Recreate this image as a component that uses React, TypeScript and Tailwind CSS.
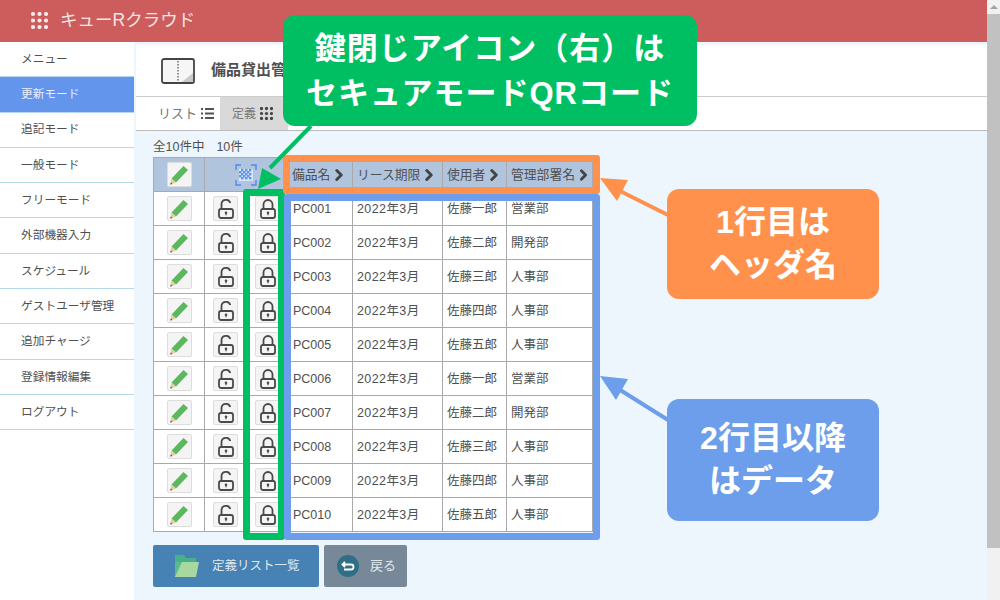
import { ChevronRight } from "lucide-react";

const menu = ["メニュー", "更新モード", "追記モード", "一般モード", "フリーモード", "外部機器入力", "スケジュール", "ゲストユーザ管理", "追加チャージ", "登録情報編集", "ログアウト"];
const heads = ["備品名", "リース期限", "使用者", "管理部署名"];
const rows = [
  ["PC001", "佐藤一郎", "営業部"],
  ["PC002", "佐藤二郎", "開発部"],
  ["PC003", "佐藤三郎", "人事部"],
  ["PC004", "佐藤四郎", "人事部"],
  ["PC005", "佐藤五郎", "人事部"],
  ["PC006", "佐藤一郎", "営業部"],
  ["PC007", "佐藤二郎", "開発部"],
  ["PC008", "佐藤三郎", "人事部"],
  ["PC009", "佐藤四郎", "人事部"],
  ["PC010", "佐藤五郎", "人事部"],
];

function Dots({ className }: { className: string }) {
  return (
    <svg viewBox="0 0 17 17" className={className} fill="currentColor">
      {[2, 8.5, 15].map((y) => [2, 8.5, 15].map((x) => <circle key={`${x}-${y}`} cx={x} cy={y} r="2.1" />))}
    </svg>
  );
}

function Pencil() {
  return (
    <svg viewBox="0 0 22 22" className="h-[22px] w-[22px]">
      <path d="M15.5 2 20 6 8 18.5 3.5 14.5z" fill="#5cb85c" />
      <path d="M3.5 14.5 8 18.5 2.2 20.5z" fill="#e8c9a0" />
      <path d="M2.9 18.6 4.4 20 2.2 20.5z" fill="#444" />
    </svg>
  );
}

function LockIcon({ open }: { open?: boolean }) {
  return (
    <svg viewBox="0 0 18 20" className="h-[20px] w-[18px]" fill="none" stroke="#4a4a4a" strokeWidth="1.800">
      <rect x="2" y="10" width="14" height="9" rx="2" />
      {open ? <path d="M4.500 10V5.500a4.500 4.500 0 0 1 8.800-1.400" /> : <path d="M4.500 10V5.500a4.500 4.500 0 0 1 9 0V10" />}
      <circle cx="9" cy="13.800" r="1.300" fill="#4a4a4a" stroke="none" />
      <path d="M9 14v2.200" strokeWidth="1.200" />
    </svg>
  );
}

function IconBtn({ children }: { children: React.ReactNode }) {
  return (
    <span className="flex h-[25px] w-[25px] items-center justify-center rounded-[2px] border border-[#dddddd] bg-[#f4f4f4]">
      {children}
    </span>
  );
}

function QrIcon() {
  const cells = [
    [2, 0], [6, 0], [10, 0], [0, 2], [4, 2], [8, 2], [2, 4], [6, 4], [10, 4], [0, 6], [4, 6], [8, 6], [2, 8], [6, 8], [10, 8],
  ];
  return (
    <svg viewBox="0 0 22 22" className="h-[22px] w-[22px]">
      <path d="M1 6V1h5M16 1h5v5M21 16v5h-5M6 21H1v-5" fill="none" stroke="#4d8bf0" strokeWidth="1.4" />
      <rect x="4" y="5" width="14" height="12" fill="#dbe8fb" />
      {cells.map(([x, y]) => (
        <rect key={`${x}-${y}`} x={x + 4} y={y + 5} width="2.400" height="2.400" fill="#5c95f0" />
      ))}
    </svg>
  );
}

function Arrow({ d, head, color }: { d: string; head: string; color: string }) {
  return (
    <>
      <path d={d} stroke={color} strokeWidth="4" fill="none" />
      <polygon points={head} fill={color} />
    </>
  );
}

function Callout({ className, lines }: { className: string; lines: string[] }) {
  return (
    <div className={`absolute flex flex-col items-center justify-center font-bold text-white ${className}`}>
      {lines.map((l) => (
        <span key={l}>{l}</span>
      ))}
    </div>
  );
}

export default function App() {
  return (
    <div className="relative flex h-[600px] w-[1000px] overflow-hidden bg-[#eef6fd] font-['Liberation_Sans','Noto_Sans_CJK_JP',sans-serif] text-[12.5px] text-[#505050]">
      <div className="flex w-[987px] flex-col">
        <header className="flex h-[42px] shrink-0 items-center gap-[12px] bg-[#cd5c5c] pb-[1px] pl-[31px] text-[17.500px] text-[#f4e6e6]">
          <Dots className="h-[17px] w-[17px] text-[#f5e9e9]" />
          <span>キューRクラウド</span>
        </header>
        <div className="flex min-h-0 flex-1">
          <nav className="w-[134px] shrink-0 bg-white text-[11.700px]">
            {menu.map((m) => (
              <div
                key={m}
                className={`flex h-[35.3px] items-center border-b border-[#b5d8ea] pb-[1px] pl-[21px] ${m === "更新モード" ? "bg-[#6495ed] text-[#e8effc]" : ""}`}
              >
                {m}
              </div>
            ))}
          </nav>
          <main className="ml-[2px] flex min-w-0 flex-1 flex-col">
            <div className="mt-[3px] flex h-[52px] items-center gap-[16px] border-b border-[#cccccc] bg-white pl-[25px]">
              <svg viewBox="0 0 34 26" className="h-[26px] w-[34px]">
                <rect x="1" y="1" width="32" height="24" rx="2" fill="#f6f6f6" stroke="#444" strokeWidth="1.800" />
                <path d="M17 3v20" stroke="#666" strokeWidth="1.400" strokeDasharray="1.500 1.500" />
                <path d="M32 15v9H21z" fill="#c9c9c9" />
              </svg>
              <span className="text-[15px] font-bold">備品貸出管理</span>
            </div>
            <div className="flex h-[34px] border-b border-[#bbbbbb] bg-white pl-[17px]">
              <div className="flex w-[67px] items-center gap-1 pl-[5px] text-[13px] text-[#777777]">
                リスト
                <svg viewBox="0 0 13 11" className="h-[11px] w-[13px]" fill="#555555">
                  <path d="M0 0h2v2H0zM4 0h9v2H4zM0 4.500h2v2H0zM4 4.500h9v2H4zM0 9h2v2H0zM4 9h9v2H4z" />
                </svg>
              </div>
              <div className="flex w-[68px] items-center gap-1 bg-[#d9d9d9] pl-[12px] text-[12px] text-[#777777]">
                定義
                <Dots className="h-[13px] w-[13px] text-[#444444]" />
              </div>
            </div>
            <div className="flex-1 pl-[17px]">
              <p className="flex h-[26px] items-end gap-[12px]">
                <span>全10件中</span>
                <span>10件</span>
              </p>
              <table className="w-[439px] table-fixed border-collapse">
                <colgroup>
                  <col className="w-[51px]" />
                  <col className="w-[83px]" />
                  <col className="w-[65px]" />
                  <col className="w-[90px]" />
                  <col className="w-[64px]" />
                  <col className="w-[86px]" />
                </colgroup>
                <thead>
                  <tr className="h-[34px] bg-[#b0c4de]">
                    <th className="border border-[#a9a9a9]">
                      <span className="flex justify-center">
                        <IconBtn><Pencil /></IconBtn>
                      </span>
                    </th>
                    <th className="border border-[#a9a9a9]">
                      <span className="flex justify-center pr-[1px]"><QrIcon /></span>
                    </th>
                    {heads.map((h) => (
                      <th key={h} className="border border-[#a9a9a9] pl-[4px] text-left text-[12.800px] font-normal">
                        <span className="flex items-center gap-0 whitespace-nowrap">
                          {h}
                          <ChevronRight size={18} strokeWidth={4} className="text-[#444444]" />
                        </span>
                      </th>
                    ))}
                  </tr>
                </thead>
                <tbody>
                  {rows.map(([id, user, dept]) => (
                    <tr key={id} className="h-[34px] bg-white">
                      <td className="border border-[#a9a9a9]">
                        <span className="flex justify-center">
                          <IconBtn><Pencil /></IconBtn>
                        </span>
                      </td>
                      <td className="border border-[#a9a9a9]">
                        <span className="flex gap-[17px] pl-[8px]">
                          <IconBtn><LockIcon open /></IconBtn>
                          <IconBtn><LockIcon /></IconBtn>
                        </span>
                      </td>
                      <td className="border border-[#a9a9a9] pl-[5px] pt-[2px]">{id}</td>
                      <td className="border border-[#a9a9a9] pl-[4px] pt-[2px] tracking-[0.4px]">2022年3月</td>
                      <td className="border border-[#a9a9a9] pl-[4px] pt-[2px]">{user}</td>
                      <td className="border border-[#a9a9a9] pl-[4px] pt-[2px]">{dept}</td>
                    </tr>
                  ))}
                </tbody>
              </table>
              <div className="mt-[13px] flex gap-[5px] text-[#dfe7ee]">
                <button className="flex h-[42px] w-[166px] items-center gap-[12px] rounded-[2px] bg-[#4682b4] pl-[21px]">
                  <svg viewBox="0 0 26 24" className="h-[24px] w-[26px]">
                    <path d="M1 1h9l2 3h10v6H1z" fill="#45b08c" />
                    <path d="M1 8h24l-3 15H1z" fill="#a8d8a0" />
                    <path d="M1 23 8 8H1z" fill="#5bb890" />
                  </svg>
                  定義リスト一覧
                </button>
                <button className="flex h-[42px] w-[83px] items-center gap-[11px] rounded-[2px] bg-[#778899] pl-[13px] text-[13px]">
                  <svg viewBox="0 0 22 22" className="h-[22px] w-[22px]">
                    <circle cx="11" cy="11" r="11" fill="#2f6f86" />
                    <path d="M8 7 5.500 9.500 8 12M6 9.500h8a2 2 0 0 1 0 5H7" fill="none" stroke="white" strokeWidth="1.800" />
                  </svg>
                  戻る
                </button>
              </div>
            </div>
          </main>
        </div>
      </div>
      <div className="relative w-[13px] bg-[#f1f1f1]">
        <div className="flex h-[14px] items-center justify-center">
          <div className="h-0 w-0 border-x-[4px] border-b-[4px] border-x-transparent border-b-[#a3a3a3]" />
        </div>
        <div className="h-[534px] bg-[#c1c1c1]" />
      </div>

      {/* annotations drawn over the screenshot */}
      <div className="absolute left-[243px] top-[189px] h-[351px] w-[42px] rounded-[3px] border-[7px] border-[#00bf63]" />
      <div className="absolute left-[284px] top-[194px] h-[346px] w-[316px] rounded-[3px] border-[7px] border-[#6d9eeb]" />
      <div className="absolute left-[283px] top-[155px] h-[39px] w-[317px] rounded-[3px] border-[7px] border-[#ff914d]" />
      <svg className="absolute left-0 top-0 h-[600px] w-[1000px]" viewBox="0 0 1000 600">
        <Arrow d="M311 126 270 168" head="258,189 262,168 281,179" color="#00bf63" />
        <Arrow d="M668 215 618 190" head="600,178 628,180 617,201" color="#ff914d" />
        <Arrow d="M668 420 617 388" head="600,376 628,379 616,400" color="#6d9eeb" />
      </svg>
      <Callout
        className="left-[283px] top-[15px] h-[111px] w-[414px] rounded-[12px] bg-[#00bf63] text-[31px] leading-[45px] tracking-[1px]"
        lines={["鍵閉じアイコン（右）は", "セキュアモードQRコード"]}
      />
      <Callout
        className="left-[667px] top-[189px] h-[110px] w-[212px] rounded-[12px] bg-[#ff914d] text-[32px] leading-[43px]"
        lines={["1行目は", "ヘッダ名"]}
      />
      <Callout
        className="left-[667px] top-[399px] h-[122px] w-[212px] rounded-[12px] bg-[#6d9eeb] text-[32px] leading-[43px]"
        lines={["2行目以降", "はデータ"]}
      />
    </div>
  );
}
